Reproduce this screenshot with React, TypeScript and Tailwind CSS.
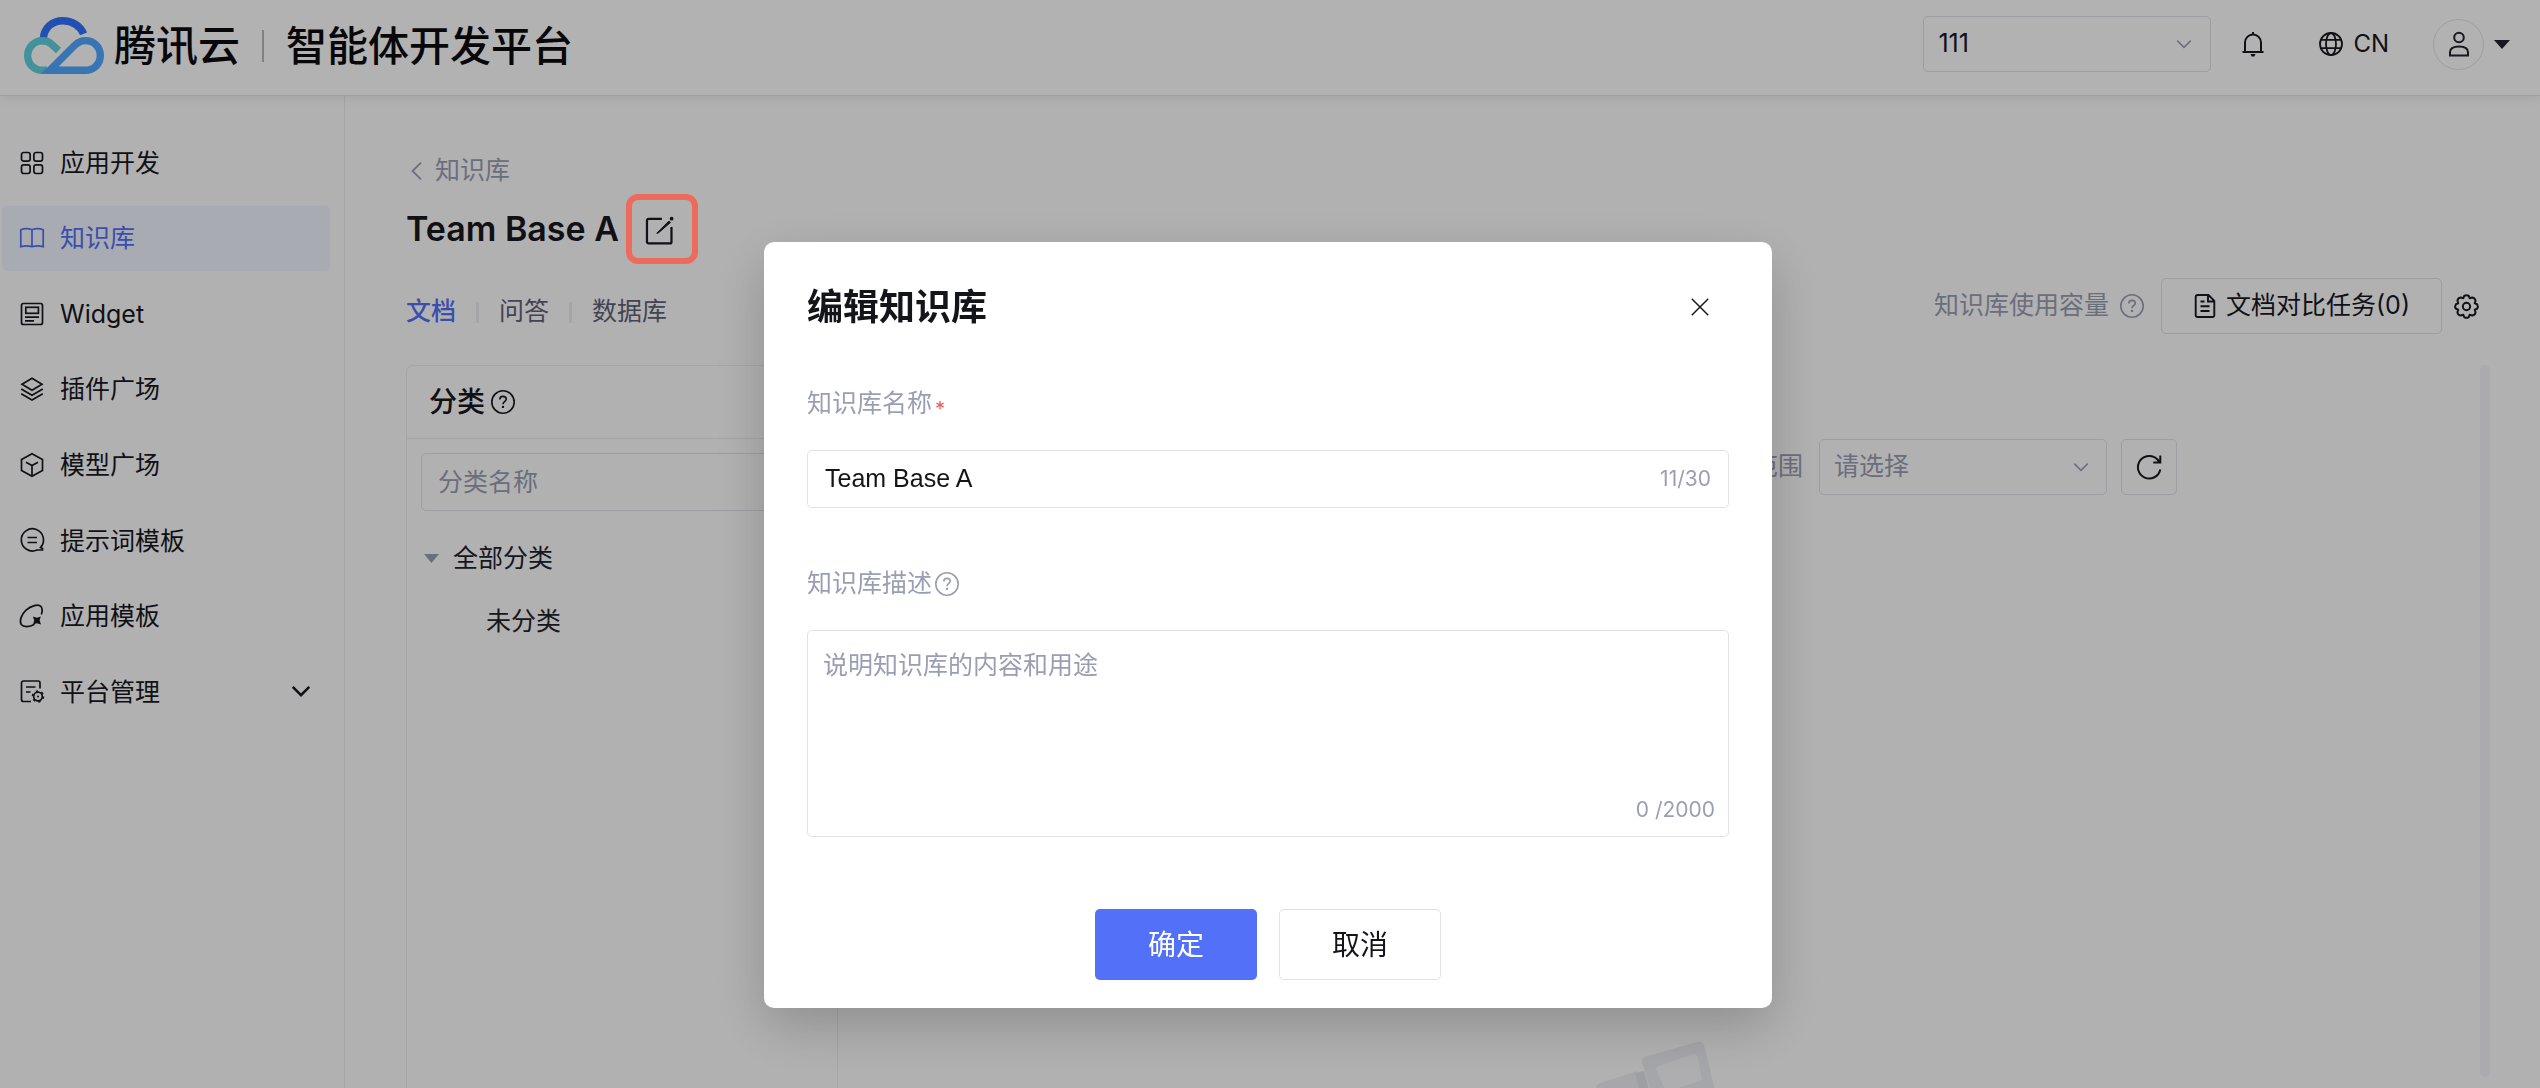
import { useState } from "react";
import type { ReactNode } from "react";

const FONT = "font-['Inter','Noto_Sans_CJK_SC',sans-serif]";

interface GlyphProps {
  children: ReactNode;
  className?: string;
  width?: number;
}

function Glyph({ children, className = "size-6", width = 2 }: GlyphProps) {
  return (
    <svg
      viewBox="0 0 24 24"
      fill="none"
      stroke="currentColor"
      strokeWidth={width}
      aria-hidden="true"
      className={`shrink-0 overflow-visible ${className}`}
    >
      {children}
    </svg>
  );
}

function HelpIcon({ className = "size-6" }: { className?: string }) {
  return (
    <Glyph className={className} width={1.6}>
      <circle cx="12" cy="12" r="11.2" />
      <path d="M8.8 9.6c0-2 1.3-3.2 3.2-3.2s3.2 1.2 3.2 2.9c0 2.3-3.2 2.5-3.2 5" />
      <circle cx="12" cy="16.9" r="1.2" fill="currentColor" stroke="none" />
    </Glyph>
  );
}

function ChevronDown({ className, width = 2 }: { className?: string; width?: number }) {
  return (
    <Glyph className={className} width={width}>
      <path d="M3 7.5l9 9 9-9" />
    </Glyph>
  );
}

function Logo() {
  return (
    <svg viewBox="0 0 80 57" className="h-[57px] w-20 shrink-0" fill="none" strokeWidth="7.4" role="img" aria-label="Logo">
      <path d="M19.3 22C20 10.5 28.5 3.7 38.8 3.7 48 3.7 56.3 8.8 59.6 16.8" stroke="#3372ff" />
      <path d="M34.5 33.5L28.5 28C25.5 25 22 23.7 18.5 23.7 10 23.7 3.7 30.5 3.7 38.8 3.7 47 10 53.3 18.5 53.3H23" stroke="#60d0de" />
      <path d="M26 53.3H61C70 53.3 76.3 47 76.3 38.5 76.3 30 70 23.6 61.5 23.6 57 23.6 53.5 25.5 50.5 28.5L23 56" stroke="#51a8ff" />
      <path d="M16.500 57L21 52.500l7-3h8V57z" fill="#51a8ff" />
    </svg>
  );
}

const NAV_ITEMS = [
  {
    label: "应用开发",
    icon: (
      <>
        <rect x="1.5" y="1.5" width="8.6" height="8.6" rx="2.2" />
        <rect x="13.9" y="1.5" width="8.6" height="8.6" rx="2.2" />
        <rect x="1.5" y="13.9" width="8.6" height="8.6" rx="2.2" />
        <rect x="13.9" y="13.9" width="8.6" height="8.6" rx="2.2" />
      </>
    ),
  },
  {
    label: "知识库",
    icon: <path d="M12 3.8C9 2.600 4 2.600.8 3.800v17c3.200-1 8.200-1 11.200 0 3-1 8-1 11.200 0v-17C20 2.600 15 2.600 12 3.800zm0 0v17" />,
  },
  {
    label: "Widget",
    icon: (
      <>
        <rect x="1.5" y="1.5" width="21" height="21" rx="2" />
        <rect x="5.8" y="5.3" width="12.6" height="6" />
        <path d="M5 15.2h14M5 18.8h9" />
      </>
    ),
  },
  {
    label: "插件广场",
    icon: <path d="M12 1.3l10 6-10 6-10-6zM1.200 12l10.800 6.200L22.800 12M1.200 16.700L12 22.900l10.800-6.200" />,
  },
  {
    label: "模型广场",
    icon: <path d="M12 .8l10.5 5.7v11L12 23.200 1.500 17.500v-11zM12 22v-9.500M6 9.200l6 3.300 6-3.300" />,
  },
  {
    label: "提示词模板",
    icon: <path d="M20.5 19.5A11.1 11.1 0 1 0 17 22h5.500v-1.500zM7.500 9.500h9.500M7.500 14.500h9.500" />,
  },
  {
    label: "应用模板",
    icon: (
      <>
        <path d="M14.5 20.2C9.5 23.2 3.5 23.4 1.2 20.5-1 17 1.500 10.500 6 6.200 11 1.500 18.500-.2 21 2.600c1.400 1.800 1.500 4.500.4 7.900" />
        <path d="M13 12.5l3.8 1.3 4-1.3-1.2 3.800 1.400 4.200-4.200-1.300-3.800 1.300 1.200-4z" fill="currentColor" stroke="none" />
      </>
    ),
  },
  {
    label: "平台管理",
    expandable: true,
    icon: (
      <>
        <path d="M20 9.5V4a2 2 0 0 0-2-2H3.500a2 2 0 0 0-2 2v16.500a2 2 0 0 0 2 2H11M6 8h9.500M6 13h4.500" />
        <circle cx="18" cy="17.5" r="4.3" />
        <circle cx="18" cy="17.5" r="5.5" strokeDasharray="2.3 3.46" strokeWidth="1.6" />
        <circle cx="18" cy="17.5" r="1" fill="currentColor" stroke="none" />
      </>
    ),
  },
];

const TABS = ["文档", "问答", "数据库"];

function Header() {
  return (
    <header className="relative z-10 flex h-24 shrink-0 items-center border-b border-[#e4e4e7] bg-white pl-6 shadow-[0_2px_10px_rgba(0,0,0,0.08)]">
      <div className="flex flex-1 items-center pb-1">
        <Logo />
        <span className="ml-[10px] text-[42px] leading-[56px] font-medium text-[#0c0c0f]">腾讯云</span>
        <span className="mx-[22px] h-8 w-[2px] bg-[#bbbbbd]" />
        <h1 className="text-[41px] leading-[56px] font-medium text-[#0c0c0f]">智能体开发平台</h1>
      </div>
      <div className="flex items-center pr-[30px] pb-[7px]">
        <div className="relative">
          <select
            aria-label="空间"
            className="h-14 w-72 appearance-none rounded-[5px] border border-[#e1e2e8] bg-transparent px-[14px] text-[25px] text-[#18181f]"
          >
            <option>111</option>
          </select>
          <ChevronDown className="pointer-events-none absolute top-[19px] right-[18px] size-[18px] text-[#9a9eb2]" />
        </div>
        <button aria-label="通知" className="ml-[30px] text-[#18181f]">
          <Glyph width={2}>
            <path d="M1.5 20h21M4 20V10.5a8 8 0 0 1 16 0V20M12 0v2.5" />
            <path d="M9.5 22h5l-1.2 2.5h-2.6z" fill="currentColor" stroke="none" />
          </Glyph>
        </button>
        <button className="ml-[54px] flex items-center gap-[10px] text-[24px] text-[#18181f]">
          <Glyph width={1.8}>
            <circle cx="12" cy="12" r="11" />
            <ellipse cx="12" cy="12" rx="5" ry="11" />
            <path d="M2 7.8h20M2 16.2h20" />
          </Glyph>
          CN
        </button>
        <button aria-label="账户" className="ml-[44px] flex items-center gap-[10px] text-[#22222e]">
          <span className="flex size-[51px] items-center justify-center rounded-full border border-[#e1e2e8]">
            <Glyph width={2}>
              <circle cx="12" cy="5.5" r="4.8" />
              <path d="M3 23.5v-3.3c0-3.7 3-5.700 9-5.700s9 2 9 5.700v3.300z" />
            </Glyph>
          </span>
          <svg viewBox="0 0 16 9" className="h-[9px] w-4" fill="currentColor">
            <path d="M0 0h16L8 9z" />
          </svg>
        </button>
      </div>
    </header>
  );
}

function Sidebar() {
  return (
    <aside className="w-[345px] shrink-0 border-r border-[#ececf0] pt-[34px] pr-[14px] pl-[2px]">
      <nav className="flex h-[594px] flex-col justify-between">
        {NAV_ITEMS.map(item => (
          <a
            key={item.label}
            href="#"
            className={`flex h-[65px] items-center rounded-[5px] pr-[18px] pl-[18px] text-[25px] ${item.label === "知识库" ? "bg-[#f2f5ff] text-[#5270f8]" : "text-[#18181f]"}`}
          >
            <Glyph width={1.7}>{item.icon}</Glyph>
            <span className="ml-4 flex-1 pt-[2px]">{item.label}</span>
            {item.expandable && <ChevronDown className="size-[22px]" width={2.8} />}
          </a>
        ))}
      </nav>
    </aside>
  );
}

function CategoryPanel() {
  return (
    <section className="flex w-[432px] shrink-0 flex-col rounded-t-[7px] border border-b-0 border-[#ececf0]">
      <div className="flex h-[73px] items-center gap-[6px] border-b border-[#ececf0] pl-[22px] text-[28px] font-medium text-[#18181f]">
        分类
        <HelpIcon />
      </div>
      <div className="flex flex-col px-[14px] pt-[14px]">
        <input
          aria-label="分类名称"
          placeholder="分类名称"
          className="h-[58px] rounded-[5px] border border-[#e1e2e8] px-4 text-[25px] placeholder:text-[#9a9eb2]"
        />
        <ul className="mt-4 text-[25px] text-[#22222e]">
          <li className="flex h-[63px] items-center gap-[14px] pl-[3px]">
            <svg viewBox="0 0 15 9" className="h-[9px] w-[15px] text-[#9a9eb2]" fill="currentColor">
              <path d="M0 0h15L7.5 9z" />
            </svg>
            全部分类
          </li>
          <li className="flex h-[63px] items-center pl-[65px]">未分类</li>
        </ul>
      </div>
    </section>
  );
}

function DocumentArea() {
  return (
    <section className="flex min-w-0 flex-1 flex-col overflow-hidden pt-[74px]">
      <div className="flex items-center justify-end pr-[303px] text-[25px]">
        <label htmlFor="scope" className="text-[#9a9eb2]">
          范围
        </label>
        <div className="relative ml-4">
          <select
            id="scope"
            className="h-14 w-72 appearance-none rounded-[5px] border border-[#e1e2e8] bg-transparent px-[14px] text-[#9a9eb2]"
          >
            <option>请选择</option>
          </select>
          <ChevronDown className="pointer-events-none absolute top-[19px] right-[17px] size-[18px] text-[#9a9eb2]" />
        </div>
        <button
          aria-label="刷新"
          className="ml-[14px] flex size-14 items-center justify-center rounded-[5px] border border-[#e1e2e8] text-[#18181f]"
        >
          <Glyph width={2}>
            <path d="M23.3 14.5A11.3 11.3 0 1 1 20.500 4.500L23 7.500M23.300.5V7.600h-7" />
          </Glyph>
        </button>
      </div>
      <svg viewBox="0 0 138 120" className="mx-auto mt-[541px] h-[120px] w-[138px] shrink-0" aria-hidden="true">
        <path d="M12 70L6 52q0-3 4-5l37-12 14 40z" fill="#f0f0f5" />
        <path d="M45 37l9-2 10 35H53z" fill="#e3e4ea" />
        <path
          d="M54 21l53-15q5-1 7 3l20 82-58 16L52 26q0-4 2-5z"
          fill="#edeef3"
        />
        <path d="M68 30l36-12q2 0 3 2l5 22q0 2-2 3L76 56 66 33q0-2 2-3z" fill="#fafafc" />
      </svg>
    </section>
  );
}

interface DialogProps {
  name: string;
  onNameChange: (value: string) => void;
  onClose: () => void;
}

function EditDialog({ name, onNameChange, onClose }: DialogProps) {
  const [desc, setDesc] = useState("");

  return (
    <div className="fixed inset-0 z-40 flex items-start justify-center bg-black/30 pt-[242px] pr-1">
      <form
        role="dialog"
        aria-labelledby="dialog-title"
        onSubmit={e => {
          e.preventDefault();
          onClose();
        }}
        className="w-[1008px] rounded-[10px] bg-white px-[43px] pt-10 pb-7 shadow-[0_18px_54px_rgba(0,0,0,0.2)]"
      >
        <div className="flex h-[50px] items-center justify-between pr-5">
          <h2 id="dialog-title" className="text-[36px] leading-[50px] font-bold text-[#14141b]">
            编辑知识库
          </h2>
          <button type="button" aria-label="关闭" onClick={onClose} className="text-[#18181f]">
            <Glyph className="size-[18px]" width={2}>
              <path d="M1 1l22 22M23 1L1 23" />
            </Glyph>
          </button>
        </div>

        <label htmlFor="kb-name" className="mt-[54px] flex h-9 items-center text-[25px] text-[#9a9eb2]">
          知识库名称
          <span className="ml-[3px] pt-[9px] text-[20px] leading-5 text-[#e85a54]">*</span>
        </label>
        <div className="mt-[28px] flex h-[58px] items-center rounded-[5px] border border-[#e1e2e8] px-[17px]">
          <input
            id="kb-name"
            value={name}
            maxLength={30}
            onChange={e => onNameChange(e.target.value)}
            className="min-w-0 flex-1 font-['Liberation_Sans','Noto_Sans_CJK_SC',sans-serif] text-[25px] text-[#14141b] outline-none"
          />
          <span className="text-[21px] text-[#9a9eb2]">{name.length}/30</span>
        </div>

        <label htmlFor="kb-desc" className="mt-[58px] flex h-9 items-center gap-[3px] text-[25px] text-[#9a9eb2]">
          知识库描述
          <HelpIcon />
        </label>
        <div className="relative mt-[28px] h-[207px]">
          <textarea
            id="kb-desc"
            value={desc}
            maxLength={2000}
            onChange={e => setDesc(e.target.value)}
            placeholder="说明知识库的内容和用途"
            className="size-full resize-none rounded-[5px] border border-[#e1e2e8] px-[15px] py-[15px] text-[25px] leading-[38px] outline-none placeholder:text-[#9a9eb2]"
          />
          <span className="absolute right-[14px] bottom-[11px] text-[21px] leading-8 text-[#9a9eb2]">{desc.length} /2000</span>
        </div>

        <div className="mt-[72px] flex justify-center gap-[22px] text-[28px]">
          <button type="submit" className="h-[71px] w-[162px] rounded-[5px] bg-[#5270f8] text-white">
            确定
          </button>
          <button
            type="button"
            onClick={onClose}
            className="h-[71px] w-[162px] rounded-[5px] border border-[#e1e2e8] text-[#14141b]"
          >
            取消
          </button>
        </div>
      </form>
    </div>
  );
}

export default function App() {
  const [open, setOpen] = useState(true);
  const [tab, setTab] = useState("文档");
  const [name, setName] = useState("Team Base A");

  return (
    <div className={`flex h-screen flex-col overflow-hidden bg-[#fefeff] ${FONT}`}>
      <Header />
      <div className="flex min-h-0 flex-1">
        <Sidebar />
        <main className="flex min-w-0 flex-1 flex-col pt-14 pr-[50px] pl-[61px]">
          <a href="#" className="flex h-9 items-center gap-[13px] self-start pt-[2px] pl-[5px] text-[25px] text-[#9a9eb2]">
            <svg viewBox="0 0 11 18" className="h-[18px] w-[11px]" fill="none" stroke="currentColor" strokeWidth="1.8">
              <path d="M10 .7L1.5 9l8.5 8.300" />
            </svg>
            知识库
          </a>
          <div className="mt-[6px] flex h-[70px] items-center gap-[7px]">
            <h2 className="text-[34px] leading-[50px] font-semibold text-[#18181f]">Team Base A</h2>
            <button
              aria-label="编辑"
              onClick={() => setOpen(true)}
              className="relative z-50 flex h-[70px] w-[72px] items-center rounded-xl border-[6px] border-[#ee6a5a] pt-[2px] pl-[13px] text-[#111116]"
            >
              <Glyph className="size-7" width={1.9}>
                <path d="M14.5 2.500H3a1.300 1.300 0 0 0-1.300 1.300v18.400A1.300 1.300 0 0 0 3 23.500h18.400a1.300 1.300 0 0 0 1.300-1.300V9.500" />
                <path d="M10 14.8L20.500 4.300l1.300 1.300L11.500 14.500z" fill="currentColor" strokeWidth="0.8" />
                <circle cx="22.8" cy="2.3" r="1.6" fill="currentColor" stroke="none" />
              </Glyph>
            </button>
          </div>

          <div className="mt-[14px] flex h-14 shrink-0 items-center pr-[11px] text-[25px]">
            <div className="flex flex-1 items-center gap-5 pt-3">
              {TABS.map((t, i) => (
                <div key={t} className="flex items-center gap-5">
                  {i > 0 && <span className="h-[21px] w-[3px] bg-[#ececf0]" />}
                  <button onClick={() => setTab(t)} className={tab === t ? "font-medium text-[#5270f8]" : "text-[#5f6278]"}>
                    {t}
                  </button>
                </div>
              ))}
            </div>
            <span className="text-[#9a9eb2]">知识库使用容量</span>
            <HelpIcon className="ml-[11px] size-6 text-[#9a9eb2]" />
            <button className="ml-[17px] flex h-14 w-[281px] items-center justify-center gap-[9px] rounded-[5px] border border-[#e1e2e8] text-[#18181f]">
              <Glyph width={1.9}>
                <path d="M15.5 1H4.500A1.800 1.800 0 0 0 2.700 2.800v18.400A1.800 1.800 0 0 0 4.500 23h15a1.800 1.800 0 0 0 1.800-1.800V6.800zM15 1v6.500h6M7.500 7.500h4M7.500 12.300h9M7.500 17h9" />
              </Glyph>
              文档对比任务(0)
            </button>
            <button aria-label="设置" className="ml-3 text-[#18181f]">
              <Glyph className="size-[25px]" width={1.9}>
                <path
                  strokeLinejoin="round"
                  d="M9.8 1.800Q12 .4 14.200 1.800L15 4.100 17.600 3.300Q20.100 3.700 20.700 6.400L19.900 9 22.200 9.800Q23.600 12 22.200 14.200L19.900 15 20.700 17.600Q20.300 20.100 17.600 20.700L15 19.900 14.200 22.200Q12 23.600 9.800 22.200L9 19.900 6.400 20.700Q3.700 20.300 3.300 17.600L4.100 15 1.800 14.200Q.4 12 1.800 9.800L4.100 9 3.300 6.400Q3.700 3.700 6.400 3.300L9 4.100z"
                />
                <circle cx="12" cy="12" r="3.5" />
              </Glyph>
            </button>
          </div>

          <div className="mt-[31px] flex min-h-0 flex-1">
            <CategoryPanel />
            <DocumentArea />
            <div className="mb-[11px] w-[10px] shrink-0 rounded-full bg-[#f4f4fb]" />
          </div>
        </main>
      </div>
      {open && <EditDialog name={name} onNameChange={setName} onClose={() => setOpen(false)} />}
    </div>
  );
}
